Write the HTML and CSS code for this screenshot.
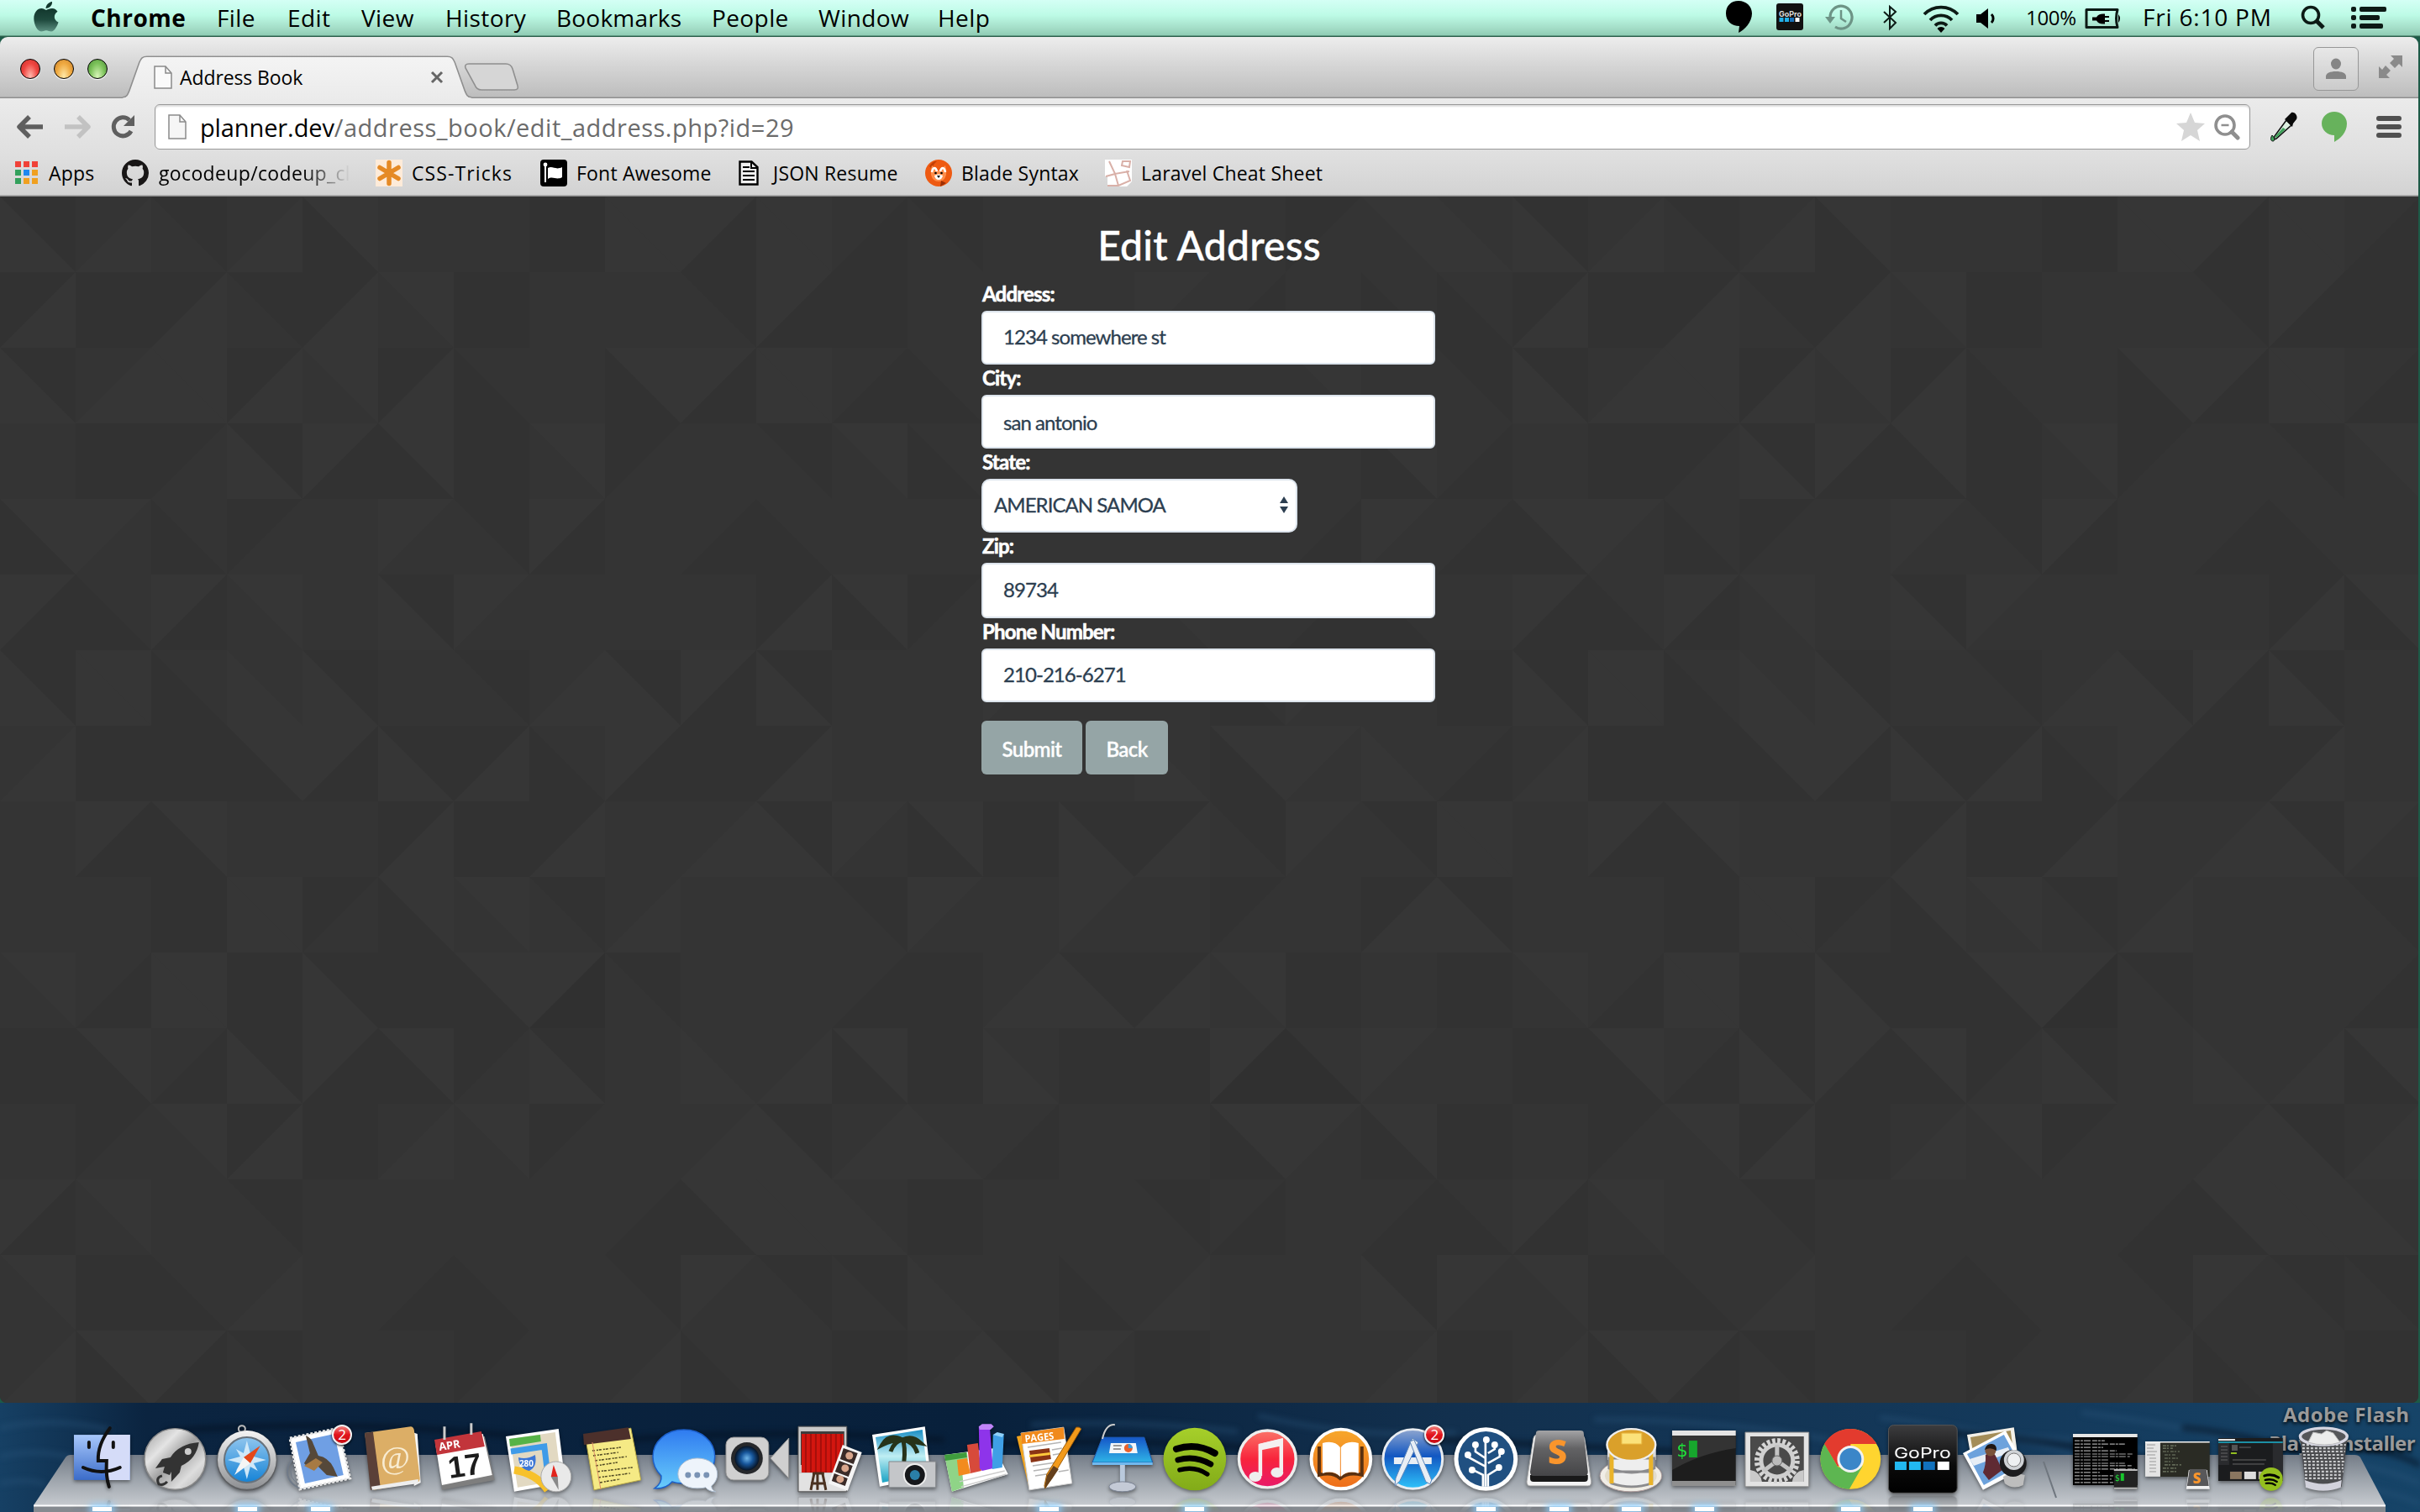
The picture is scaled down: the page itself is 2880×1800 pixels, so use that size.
FILE: index.html
```html
<!DOCTYPE html>
<html lang="en">
<head>
<meta charset="utf-8">
<title>Address Book</title>
<link rel="stylesheet" href="styles.css">
</head>
<body>
<svg class="defs" width="0" height="0" aria-hidden="true">
  <defs>
    <linearGradient id="steel" x1="0" y1="0" x2="0" y2="1"><stop offset="0" stop-color="#f4f4f4"/><stop offset="1" stop-color="#8d8f92"/></linearGradient>
    <linearGradient id="disc" x1="0" y1="0" x2="1" y2="1"><stop offset="0" stop-color="#9a9a9a"/><stop offset=".3" stop-color="#e4e4e4"/><stop offset=".5" stop-color="#a2a2a2"/><stop offset=".75" stop-color="#dedede"/><stop offset="1" stop-color="#a8a8a8"/></linearGradient>
    <linearGradient id="finder" x1="0" y1="0" x2="0" y2="1"><stop offset="0" stop-color="#a8c8fb"/><stop offset="1" stop-color="#3b6cc9"/></linearGradient>
    <linearGradient id="sky" x1="0" y1="0" x2="0" y2="1"><stop offset="0" stop-color="#8fc5ee"/><stop offset="1" stop-color="#1583d6"/></linearGradient>
    <linearGradient id="bubble" x1="0" y1="0" x2="0" y2="1"><stop offset="0" stop-color="#2f7bf0"/><stop offset="1" stop-color="#69cdfb"/></linearGradient>
    <linearGradient id="tunes" x1="0" y1="0" x2="0" y2="1"><stop offset="0" stop-color="#fb7468"/><stop offset=".5" stop-color="#f8243c"/><stop offset="1" stop-color="#e81a6a"/></linearGradient>
    <linearGradient id="books" x1="0" y1="0" x2="0" y2="1"><stop offset="0" stop-color="#f7a82c"/><stop offset="1" stop-color="#ee6d1a"/></linearGradient>
    <linearGradient id="store" x1="0" y1="0" x2="0" y2="1"><stop offset="0" stop-color="#8fa6cf"/><stop offset=".45" stop-color="#1257c2"/><stop offset="1" stop-color="#2fc4fb"/></linearGradient>
    <linearGradient id="key" x1="0" y1="0" x2="0" y2="1"><stop offset="0" stop-color="#a3a3a5"/><stop offset=".4" stop-color="#626264"/><stop offset="1" stop-color="#454547"/></linearGradient>
    <linearGradient id="black" x1="0" y1="0" x2="0" y2="1"><stop offset="0" stop-color="#3c3c3e"/><stop offset=".6" stop-color="#0a0a0a"/><stop offset="1" stop-color="#000"/></linearGradient>
    <linearGradient id="beach" x1="0" y1="0" x2="0" y2="1"><stop offset="0" stop-color="#1b8fc4"/><stop offset=".5" stop-color="#bfeef3"/><stop offset="1" stop-color="#1aa3c4"/></linearGradient>
    <linearGradient id="table" x1="0" y1="0" x2="0" y2="1"><stop offset="0" stop-color="#1556c8"/><stop offset="1" stop-color="#2fb4e6"/></linearGradient>
    <radialGradient id="lens"><stop offset="0" stop-color="#6fb4e8"/><stop offset=".5" stop-color="#16559a"/><stop offset="1" stop-color="#061426"/></radialGradient>
    <linearGradient id="lime" x1="0" y1="0" x2="0" y2="1"><stop offset="0" stop-color="#a6cf2a"/><stop offset="1" stop-color="#82ab18"/></linearGradient>
    <linearGradient id="apple" x1="0" y1="0" x2="0" y2="1"><stop offset="0" stop-color="#12372d"/><stop offset=".5" stop-color="#1f4a3e"/><stop offset="1" stop-color="#5c8f80"/></linearGradient>
    <linearGradient id="tabfill" x1="0" y1="0" x2="0" y2="1"><stop offset="0" stop-color="#f4f4f4"/><stop offset="1" stop-color="#ebebeb"/></linearGradient>
    <linearGradient id="shelf" x1="0" y1="0" x2="0" y2="1"><stop offset="0" stop-color="#747c87"/><stop offset=".45" stop-color="#9aa1a9"/><stop offset="1" stop-color="#c6cacf"/></linearGradient>
  </defs>
</svg>

<header class="menubar">
  <svg class="apple" viewBox="0 0 30 36"><path fill="url(#apple)" d="M15 10c2-1 4-2 7-2 3 0 5 1.600 6.500 3.700-5.500 3.500-4.500 10.600 1 12.800-1 3.500-4.500 11-8.500 11-2.500 0-3.500-1.300-6-1.300s-3.800 1.300-6 1.300C4.500 35.500.3 27 .3 20c0-7.500 4.500-12 9-12 2.500 0 4 1.300 5.700 2z"/><path fill="#12372d" d="M14.500 8C14.500 4 18 .5 22 0c.5 4-3 8-7.500 8z"/></svg>
  <nav class="menus">
    <span class="app">Chrome</span><span class="m1">File</span><span class="m2">Edit</span><span class="m3">View</span><span class="m4">History</span><span class="m5">Bookmarks</span><span class="m6">People</span><span class="m7">Window</span><span class="m8">Help</span>
  </nav>
  <div class="status">
    <svg viewBox="2050 0 430 44" width="430" height="44">
      <path d="M2069 1c9 0 16 6.500 16 15 0 10-9 20-16 23l1-8c-9 0-16-6-16-15s6-15 15-15z"/>
      <rect x="2114" y="4" width="32" height="32" rx="3" fill="#111"/><text x="2117" y="20" class="gopro-sm">GoPro</text><path fill="#22b0ea" d="M2117.500 21h5v5h-5zM2124 21h5v5h-5z"/><path fill="#1870b8" d="M2130 21h5v5h-5z"/><path fill="#fff" d="M2136.500 21h5v5h-5z"/>
      <g fill="none" stroke="#6d9486" stroke-width="3.200"><path d="M2178 21a13 13.500 0 1 1 6 11"/><path d="M2191 12v10l6 4" stroke-width="2.500"/></g><path fill="#6d9486" d="M2172 20h12l-6 8z"/>
      <path d="M2242 14l14 13-7 7V8l7 6-14 13" fill="none" stroke="#0c1a15" stroke-width="2"/>
      <g fill="none" stroke="#0c1a15" stroke-width="3.800"><path d="M2290 17a28 28 0 0 1 40 0"/><path d="M2297 24a18 18 0 0 1 26 0"/><path d="M2303 30.500a9.500 9.500 0 0 1 14 0"/></g><path d="M2305.500 34l4.500 5 4.500-5a6 6 0 0 0-9 0z"/>
      <path d="M2352 17h5l9-7v24l-9-7h-5z"/><path d="M2370 17a7 7 0 0 1 0 10" fill="none" stroke="#000" stroke-width="3"/>
      <text x="2411" y="30" class="pct" textLength="60">100%</text>
    </svg>
    <svg viewBox="2480 0 66 44" width="66" height="44"><path d="M2483 11.500h37q-3 10.500 0 21h-37z" fill="none" stroke="#0c1a15" stroke-width="3" stroke-linejoin="round"/><path d="M2521 17q4 5 0 10z"/><path d="M2490 20.500h5q2-4 8-4h2v2.500h5v2h-5v3h5v2h-5v2.500h-2q-6 0-8-4h-5z"/></svg>
    <span class="clock">Fri 6:10 PM</span>
    <svg viewBox="2735 0 110 44" width="110" height="44"><circle cx="2750" cy="18" r="9.500" fill="none" stroke="#0c1a15" stroke-width="3.600"/><path d="M2757 25l8 8" stroke="#0c1a15" stroke-width="5"/><g fill="#0c1a15"><rect x="2798" y="8" width="6" height="6" rx="2"/><rect x="2808" y="8" width="32" height="6" rx="2"/><rect x="2798" y="18" width="6" height="6" rx="2"/><rect x="2808" y="18" width="24" height="6" rx="2"/><rect x="2798" y="28" width="6" height="6" rx="2"/><rect x="2808" y="28" width="28" height="6" rx="2"/></g></svg>
  </div>
</header>

<section class="window">
  <div class="tabstrip">
    <div class="lights"><i class="red"></i><i class="amber"></i><i class="green"></i></div>
    <div class="tab">
      <svg class="tab-shape" viewBox="0 0 424 52"><path d="M0 50.500c5 0 6-3 8-8L20 8c2-5 4-7.500 9-7.500h361c5 0 7 3 9 7.500l12 34.500c2 5 3 8 8 8V52H0z" fill="url(#tabfill)"/><path d="M0 50c5 0 6-3 8-8L20 8c2-5 4-7 9-7h361c5 0 7 2 9 7l12 34c2 5 3 8 8 8" fill="none" stroke="#8f8f8f" stroke-width="1.600"/></svg>
      <div class="tab-body">
        <svg width="22" height="28" viewBox="0 0 22 28"><path d="M1 1h13l7 8v18H1z" fill="#fafafa" stroke="#8a8a8a" stroke-width="1.500"/><path d="M14 1v8h7" fill="none" stroke="#8a8a8a" stroke-width="1.500"/></svg>
        <span class="tab-title">Address Book</span>
        <svg width="16" height="16" viewBox="0 0 16 16"><path d="M2 2l12 12M14 2L2 14" stroke="#666" stroke-width="3"/></svg>
      </div>
    </div>
    <svg class="newtab" width="66" height="36" viewBox="0 0 66 36"><path d="M6 2h44c5 0 7 3 8 6l6 20c1 3 0 5-4 5H21c-5 0-7-3-8-6L2 7c-1-3 0-5 4-5z" fill="#d6d6d6" stroke="#8f8f8f" stroke-width="1.600"/></svg>
    <div class="strip-right">
      <div class="user"><svg width="26" height="26" viewBox="0 0 26 26" fill="#858585"><ellipse cx="13" cy="7" rx="6" ry="6.500"/><path d="M1 25v-3c0-4 5-6 12-6s12 2 12 6v3z"/></svg></div>
      <svg width="28" height="28" viewBox="0 0 28 28" fill="#8a8a8a"><path d="M14 1h14v14l-4-4-5 5-6-6 5-5zM0 14l4 4 4-5 6 6-5 5 4 4H0z"/></svg>
    </div>
  </div>

  <div class="toolbar">
    <div class="navs">
      <svg width="32" height="30" viewBox="0 0 32 30"><path d="M15 3L3 15l12 12M4 15h27" fill="none" stroke="#5f5f5f" stroke-width="5.500" stroke-linejoin="round"/></svg>
      <svg width="32" height="30" viewBox="0 0 32 30"><path d="M17 3l12 12-12 12M28 15H1" fill="none" stroke="#c2c2c2" stroke-width="5.500" stroke-linejoin="round"/></svg>
      <svg width="30" height="30" viewBox="0 0 30 30"><path d="M24 20a11 11 0 1 1-2-13" fill="none" stroke="#5f5f5f" stroke-width="5"/><path d="M28 1v13H15z" fill="#5f5f5f"/></svg>
    </div>
    <div class="omnibox">
      <svg width="22" height="30" viewBox="0 0 22 30"><path d="M1 1h13l7 8v20H1z" fill="#f6f6f6" stroke="#8a8a8a" stroke-width="1.500"/><path d="M14 1v8h7" fill="none" stroke="#8a8a8a" stroke-width="1.500"/></svg>
      <span class="url"><b>planner.dev</b>/address_book/edit_address.php?id=29</span>
      <svg class="star" width="36" height="36" viewBox="0 0 36 36"><path fill="#d6d6d6" d="M18 1l5 12 12 1-9 8 3 13-11-7-11 7 3-13-9-8 12-1z"/></svg>
      <svg width="32" height="32" viewBox="0 0 32 32"><g fill="none" stroke="#8f8f8f"><circle cx="14" cy="14" r="11" stroke-width="3.600"/><path d="M9.500 14h9" stroke-width="2.600"/><path d="M22 22l7 7" stroke-width="5" stroke-linecap="round"/></g></svg>
    </div>
    <svg class="ext" viewBox="0 0 32 36"><path d="M19 10l6 6L7 32l-3 1 1-4z" fill="#dceee0" stroke="#111" stroke-width="1.600"/><path d="M15 19l3 2L7 31l-2-1z" fill="#3fa05a"/><path d="M17 9l9 9 1-4 4-5c2-4-2-9-6-8l-6 6z" fill="#0a0a0a"/><path d="M2 28c-3 5-1 7 1 7s3-3-1-7z" fill="#3fa05a" stroke="#111"/></svg>
    <svg class="balloon" viewBox="0 0 30 36"><path fill="#67b25c" d="M15 0c8 0 15 6 15 14 0 11-8 18-15 22v-8C7 28 0 22 0 14S7 0 15 0z"/></svg>
    <svg class="burger" viewBox="0 0 30 26" fill="#505050"><rect width="30" height="6" rx="3"/><rect y="10" width="30" height="6" rx="3"/><rect y="20" width="30" height="6" rx="3"/></svg>
  </div>

  <nav class="bookmarks">
    <a class="b0"><svg width="28" height="28" viewBox="0 0 28 28"><path fill="#f04138" d="M0 0h7v7H0zM10 0h7v7h-7zM20 0h7v7h-7z"/><path fill="#33a05c" d="M0 10h7v7H0zM0 20h7v7H0z"/><path fill="#1e88f0" d="M10 10h7v7h-7z"/><path fill="#f0a020" d="M20 10h7v7h-7zM10 20h7v7h-7zM20 20h7v7h-7z"/></svg><span>Apps</span></a>
    <a class="b1"><svg width="32" height="32" viewBox="0 0 16 16"><path fill="#181616" d="M8 0C3.580 0 0 3.580 0 8c0 3.540 2.290 6.530 5.470 7.590.4.070.55-.17.55-.38 0-.19-.01-.82-.01-1.490-2.010.37-2.530-.49-2.690-.94-.09-.23-.48-.94-.82-1.130-.28-.15-.68-.52-.01-.53.63-.01 1.080.58 1.230.82.72 1.210 1.870.87 2.330.66.07-.52.28-.87.51-1.070-1.780-.2-3.640-.89-3.640-3.950 0-.87.31-1.590.82-2.150-.08-.2-.36-1.020.08-2.120 0 0 .67-.21 2.200.82.640-.18 1.320-.27 2-.27s1.360.09 2 .27c1.530-1.040 2.200-.82 2.200-.82.44 1.100.16 1.920.08 2.120.51.560.82 1.270.82 2.150 0 3.070-1.870 3.750-3.650 3.950.29.25.54.73.54 1.480 0 1.070-.01 1.930-.01 2.200 0 .21.15.46.55.38A8.010 8.010 0 0 0 16 8c0-4.420-3.580-8-8-8z"/></svg><span class="fade">gocodeup/codeup_cl</span></a>
    <a class="b2"><svg width="32" height="32" viewBox="0 0 32 32"><rect width="32" height="32" fill="#fdebd9"/><path d="M16 3.500v25M5 9.500l22 13M27 9.500l-22 13" stroke="#e58a25" stroke-width="5.500" stroke-linecap="round"/></svg><span>CSS-Tricks</span></a>
    <a class="b3"><svg width="32" height="32" viewBox="0 0 32 32"><rect width="32" height="32" rx="4"/><path d="M6 5v22" stroke="#fff" stroke-width="2"/><circle cx="6" cy="6" r="2.400" fill="#fff"/><path fill="#fff" d="M9 10c6-3 9 3 17-1v12c-7 4-11-2-17 2z"/></svg><span>Font Awesome</span></a>
    <a class="b4"><svg width="24" height="30" viewBox="0 0 24 30"><path d="M1.500 1.500h14L22.500 8v20.500h-21z" fill="#f0f0f0" stroke="#000" stroke-width="2.400"/><path d="M5 8h8M5 13h14M5 18h14M5 23h14" stroke="#000" stroke-width="2.200"/><path d="M15 2v7h7" fill="none" stroke="#000" stroke-width="2"/></svg><span>JSON Resume</span></a>
    <a class="b5"><svg width="32" height="32" viewBox="0 0 32 32"><circle cx="16" cy="16" r="16" fill="#ee5a12"/><path d="M5 8q4-7 9-6-5 4-6 9z" fill="#c23f06"/><path d="M8 7q1 0 5 6h6q4-6 5-6 2 5 1 11-2 8-9 8t-9-8q-1-6 1-11z" fill="#ff8d4a"/><path d="M8 15q1-5 3-5t3 4M18 14q1-4 3-4t3 5" stroke="#fff" stroke-width="2.600" fill="none"/><path d="M11 19q5-3 10 0-1 5-5 5t-5-5z" fill="#fff"/><circle cx="12.500" cy="16" r="1.300"/><circle cx="19.500" cy="16" r="1.300"/><path d="M14 19h4l-2 3z"/><path d="M19 25l6 3-7 4z" fill="#9c2f04"/></svg><span>Blade Syntax</span></a>
    <a class="b6"><svg width="32" height="32" viewBox="0 0 32 32"><path fill="#fff" d="M0 0h32v26l-6 6H3V20H0z"/><path d="M5 2l7 15 17-3M12 17l4 14 14-6-4-12M21 2l9 0-1 7-9-2zM1 20l11-3M16 31l-13 0" fill="none" stroke="#d9b0a8" stroke-width="2"/></svg><span>Laravel Cheat Sheet</span></a>
  </nav>

  <main class="page">
    <svg class="facets" width="2878" height="1436" aria-hidden="true"></svg>
    <form class="form">
      <h1>Edit Address</h1>
      <label>Address:</label><div class="field">1234 somewhere st</div>
      <label>City:</label><div class="field low">san antonio</div>
      <label>State:</label>
      <div class="field select"><span>AMERICAN SAMOA</span><svg width="10" height="20" viewBox="0 0 10 20"><path fill="#2c3e50" d="M5 0l5 8H0zM5 20l5-8H0z"/></svg></div>
      <label>Zip:</label><div class="field tall">89734</div>
      <label>Phone Number:</label><div class="field">210-216-6271</div>
      <div class="actions"><span class="btn submit">Submit</span><span class="btn back">Back</span></div>
    </form>
  </main>
</section>

<footer class="desktop">
  <svg class="waves" width="2880" height="130" viewBox="0 0 2880 130" preserveAspectRatio="none"><g fill="none" stroke-linecap="round"><g stroke="#2a567c" stroke-opacity=".35" stroke-width="7"><path d="M0 30q60-14 130 2M0 64q50-12 100 6M0 96q30-6 50 0M1230 26q120-6 240 8M1500 16q110 26 230 20M1900 20q150 0 290 26M2240 18q160 18 250 52M2360 40q130 0 240 24M2480 12q160 20 230 50M2760 70q60 0 120 26M2790 100q40 0 90 20"/></g><g stroke="#04101f" stroke-opacity=".5" stroke-width="8"><path d="M200 34q200-16 420 6M700 48q200-20 420-4M1180 50q170-10 330 6M1720 44q160 8 320 16M2300 34q160 10 300 44M2600 30q120 12 210 60M2810 54q40 4 70 20"/></g></g></svg>
  <div class="desk-label"><span>Adobe Flash</span><span>Player Installer</span></div>
  <div class="dock">
    <svg class="shelf" width="2800" height="68" viewBox="0 0 2800 68"><path d="M38 3q2-3 6-3h2718q5 0 7 3l30 57H0z" fill="url(#shelf)"/><path d="M0 60h2799v8H0z" fill="#858a90"/><path d="M0 59.500h2799v2H0z" fill="#fff"/></svg>
    <ul class="icons">
      <li class="on"><svg viewBox="0 0 87 90"><rect x="10" y="18" width="67" height="54" fill="url(#finder)"/><path d="M50 18h27v54H49q-2-10-1-23H37q1-20 13-31z" fill="#d5dcf8"/><g fill="none" stroke="#111" stroke-width="4" stroke-linecap="round"><path d="M53 10q-15 20-14 39h10q-1 20 3 31"/><path d="M21 57q22 10 44 0"/><path d="M28 27v6M57 27v6"/></g></svg></li>
      <li><svg viewBox="0 0 87 90"><circle cx="43.500" cy="47" r="36.500" fill="url(#disc)" stroke="#8a8a8a" stroke-width="1.500"/><path d="M72 27q-24 2-34 18l-10 2-8 11 11-2-2 7 8 3 2-4v12l10-11 2-8q18-8 21-28z" fill="#333"/><circle cx="59" cy="38" r="4" fill="#ccc"/><path d="M28 67q-8 2-4 10 6 2 10-3" fill="none" stroke="#333" stroke-width="3"/></svg></li>
      <li class="on"><svg viewBox="0 0 87 90"><circle cx="37" cy="11" r="4" fill="none" stroke="#bbb" stroke-width="2"/><circle cx="43" cy="49" r="36" fill="#5d5f62"/><circle cx="43" cy="48" r="35" fill="url(#steel)"/><circle cx="43" cy="48" r="27" fill="url(#sky)" stroke="#67727c" stroke-width="2"/><path d="M43 25l4 15 9-5-5 9 15 4-15 4 5 9-9-5-4 15-4-15-9 5 5-9-15-4 15-4-5-9 9 5z" fill="#cfe8f8"/><path d="M59 31L47 52l-8-7z" fill="#e4481a"/><path d="M28 66l11-21 8 7z" fill="#f5f5f5"/></svg></li>
      <li class="on"><svg viewBox="0 0 87 90"><circle cx="24" cy="62" r="20" fill="none" stroke="#707a88" stroke-width="2"/><circle cx="24" cy="62" r="16" fill="none" stroke="#707a88"/><path d="M7 22l58-12 14 60-60 13z" fill="#fff" stroke="#e6e6e6" stroke-dasharray="3 2" stroke-width="3"/><path d="M14 27l46-10 11 49-46 10z" fill="#6f9fe4"/><path d="M26 19q7 3 9 10l6 14q12 2 18 14l5 11-13-2-12-12-10 3-5-5 7-12z" fill="#55483a"/><path d="M24 55l14-9 8 5-10 10z" fill="#a77a44"/></svg><b>2</b></li>
      <li><svg viewBox="0 0 87 90"><path d="M66 15l6 2 4 58-8 4z" fill="#f5f5f5"/><path d="M9 16l55-8q3 0 4 4l7 58q0 4-4 5L20 84z" fill="#dcae66"/><path d="M9 16l10-1.500L28 82l-12 2z" fill="#5a4038"/><path d="M17 80l56-9v5L18 84z" fill="#eee"/><text x="28" y="58" class="at">@</text></svg></li>
      <li><svg viewBox="0 0 87 90"><path d="M8 31l58-11 12 52-63 12z" fill="#7e7e7e"/><path d="M7 28l57-11 11 49-60 12z" fill="#fff"/><path d="M6 24l56-10 4 18-57 10z" fill="#c2353b"/><path d="M18 24V8M50 18V4" stroke="#ccc" stroke-width="3"/><text x="12" y="37" class="apr" transform="rotate(-9 12 37)">APR</text><text x="24" y="70" class="day" transform="rotate(-8 24 70)">17</text></svg></li>
      <li><svg viewBox="0 0 87 90"><path d="M4 20l63-9 8 64-61 11z" fill="#fff"/><path d="M9 23l54-8 7 57-52 9z" fill="#e2d9c2"/><path d="M8 23l37-5 1 8-37 6z" fill="#56b347"/><path d="M10 38l40-6 6 50" fill="none" stroke="#3f9be8" stroke-width="7"/><path d="M14 60q26 4 40 24" fill="none" stroke="#f7c12b" stroke-width="9"/><path d="M19 45q10 3 20-3 3 14-7 19-12-2-13-16z" fill="#3c76d6"/><text x="20" y="56" class="route">280</text><circle cx="64" cy="68" r="18" fill="#e9e9e9" stroke="#aaa"/><path d="M61 54l-3 14h8z" fill="#e2241c"/><path d="M67 84l-9-16h8z" fill="#888"/></svg></li>
      <li><svg viewBox="0 0 87 90"><path d="M12 22l54-12 12 62-56 12z" fill="#f5ea85" stroke="#b8a846"/><path d="M9 17l54-8 3 14-56 7z" fill="#4c302b"/><g stroke="#4b4420" stroke-width="1.500" fill="none" stroke-dasharray="3 2 2 1"><path d="M20 37l34-4M21 43l30-4M23 49l38-5M24 55l26-4M26 62l42-5M27 69l38-5M29 75l24-4"/></g><path d="M20 27l10 56" stroke="#dc8f66"/></svg></li>
      <li><svg viewBox="0 0 87 90"><path d="M42 12c21 0 37 14 37 32S63 75 42 76q-9 0-14-2-8 9-21 8 9-6 8-15C8 60 5 53 5 44 5 26 21 12 42 12z" fill="url(#bubble)" stroke="#1c5fca" stroke-width="1.500"/><path d="M58 46c14 0 24 8 24 19 0 6-3 11-7 14q0 5 5 7-8 0-12-5-4 1-10 1c-14 0-23-7-23-17s9-19 23-19z" fill="#eef4fb" stroke="#aebed0"/><g fill="#7a93b4"><circle cx="47" cy="66" r="3.500"/><circle cx="58" cy="66" r="3.500"/><circle cx="69" cy="66" r="3.500"/></g></svg></li>
      <li><svg viewBox="0 0 87 90"><path d="M59 46l22-24v48z" fill="#cfcfcf" stroke="#909090"/><rect x="6" y="21" width="51" height="51" rx="9" fill="#d0d0d0" stroke="#999"/><circle cx="31" cy="46" r="19" fill="#26282b"/><circle cx="31" cy="46" r="14.500" fill="url(#lens)"/></svg></li>
      <li><svg viewBox="0 0 87 90"><path d="M5 8h58v78H5z" fill="#c9c9c9" stroke="#555"/><path d="M8 14h52v40H8z" fill="#3d3d3d"/><path d="M9 17h50v46H9z" fill="#d3160f"/><path d="M14 17v46M20 17v46M26 17v46M32 17v46M38 17v46M44 17v46M50 17v46M56 17v46" stroke="#a50f0b" stroke-width="2"/><path d="M6 64h56v21H6z" fill="#e2e2e2"/><path d="M22 64h14M24 64l-4 20M34 64l4 20M28 64v20M20 76h18" stroke="#4a3120" stroke-width="3"/><path d="M58 30l23 9-17 46-23-9z" fill="#f5f5f5"/><path d="M59 34l17 6-5 13-16-6zM54 49l16 6-5 13-16-6zM48 64l16 6-3 9-16-6z" fill="#3a2b28"/><g fill="#d8a68c"><circle cx="66" cy="43" r="4.500"/><circle cx="61" cy="58" r="4.500"/><circle cx="55" cy="71" r="4.500"/></g></svg></li>
      <li><svg viewBox="0 0 87 90"><path d="M6 18l63-10 7 60-61 12z" fill="#fff"/><path d="M10 21l56-9 6 52-54 11z" fill="url(#beach)"/><path d="M44 50q2-18-2-28M42 24q-16-8-24 6 12-6 24-6 12-6 22 4-10-2-22-4-10 2-14 14M42 24q14 2 18 16" fill="none" stroke="#26331a" stroke-width="5"/><path d="M26 50h56v31H26z" fill="#c4c6c9" stroke="#85888c"/><circle cx="57" cy="66" r="14" fill="#eee"/><circle cx="57" cy="66" r="12" fill="#16181b"/><circle cx="57" cy="66" r="6" fill="#2a7fa8"/></svg></li>
      <li><svg viewBox="0 0 87 90"><path d="M6 42l60-8 16 31-67 21z" fill="#fff"/><path d="M6 42l27-3 1 10-8 1 3 31-14 5z" fill="#8fd487"/><path d="M6 42l26-3 1 6-26 4z" fill="#3f9c3d"/><path d="M21 48l12-2 4 18-14 3z" fill="#f28b1e"/><path d="M33 30l13-2 4 33-13 3z" fill="#d74a3b"/><path d="M47 8l13-1 4 51-13 3-3-3z" fill="#8e34ea"/><path d="M47 8l4-3h11l3 3-4 4H48z" fill="#c084f8"/><path d="M64 18l13-1-2 40-12 2z" fill="#3f9fe6"/><path d="M64 18l5-3 8 2-2 4z" fill="#8fd0f8"/><g stroke="#ccc" stroke-width="1.500"><path d="M24 74l54-13M26 80l54-15"/></g></svg></li>
      <li class="on"><svg viewBox="0 0 87 90"><path d="M5 20l10-2 14 62-9 3z" fill="#f3a41c"/><path d="M10 16l51-7 10 67-51 8z" fill="#fff" stroke="#ccc"/><path d="M10 16l51-7 1 14-51 6z" fill="#f08a1c"/><text x="15" y="27" class="pages" transform="rotate(-6 15 27)" textLength="35" lengthAdjust="spacingAndGlyphs">PAGES</text><path d="M20 37l24-3 2 13-24 4z" fill="#8a3415"/><path d="M20 42l25-3 0 3-25 3z" fill="#ffc93c"/><g stroke="#b5b5b5" stroke-width="1.500"><path d="M18 33l40-6M47 36l12-2M48 42l12-2M24 55l28-4M25 61l26-4M27 67l20-3M55 62l12-2"/></g><path d="M76 9q4-1 6 2L48 68l-9 14-1-3 3-14z" fill="#f29a1b" stroke="#a05c08"/><path d="M49 55l6 4-8 12-9 12 3-16z" fill="#65401c"/></svg></li>
      <li><svg viewBox="0 0 87 90"><path d="M41 48h6v34h-6z" fill="#b9c9dc"/><ellipse cx="44" cy="80" rx="16" ry="6" fill="#c4cad6" stroke="#7c8595"/><path d="M20 21h50l10 30H8z" fill="url(#table)" stroke="#1c59b0"/><path d="M8 51h72v3H8z" fill="#71b9ee"/><path d="M30 28h30l2 12H28z" fill="#f2f6fa"/><circle cx="51" cy="34" r="5" fill="#e8602c"/><path d="M51 34v-5a5 5 0 0 1 5 5z" fill="#3aa0e0"/><path d="M33 31h10M33 35h9" stroke="#999" stroke-width="2"/><path d="M20 23q4-18 15-17" fill="none" stroke="#ccc" stroke-width="2"/></svg></li>
      <li class="on"><svg viewBox="0 0 87 90"><circle cx="44" cy="47" r="37.500" fill="url(#lime)"/><g fill="none" stroke="#000" stroke-linecap="round"><path d="M22 35q24-8 46 5" stroke-width="8"/><path d="M24 48q20-6 39 5" stroke-width="7"/><path d="M26 60q18-5 33 5" stroke-width="5.500"/></g></svg></li>
      <li><svg viewBox="0 0 87 90"><circle cx="43.500" cy="47" r="34" fill="url(#tunes)" stroke="#eee" stroke-width="3.500"/><path d="M35 67V31l25-6v36" fill="none" stroke="#f4f0f0" stroke-width="4.500"/><path d="M33 29l29-7v9l-29 6z" fill="#f4f0f0"/><ellipse cx="29" cy="68" rx="7.500" ry="6" fill="#eee"/><ellipse cx="55" cy="63" rx="7.500" ry="6" fill="#eee"/></svg></li>
      <li><svg viewBox="0 0 87 90"><circle cx="44" cy="47" r="35.500" fill="url(#books)" stroke="#fff" stroke-width="4"/><path d="M18 32v34q16-4 25 4 10-8 26-4V32" fill="none" stroke="#5a3010" stroke-width="4"/><path d="M22 28q14-4 21 5v35q-8-8-21-4zM65 28q-14-4-21 5v35q8-8 21-4z" fill="#fff"/></svg></li>
      <li><svg viewBox="0 0 87 90"><circle cx="43.500" cy="47" r="35.500" fill="url(#store)" stroke="#e9edf2" stroke-width="3"/><path d="M21 45h45v8H21z" fill="#e8eef5"/><path d="M43 22l7 5-22 46-6 6 1-9z" fill="#e8eef5" stroke="#5b84b8"/><path d="M40 26l5-2 21 48-2 5-5-3z" fill="#e8eef5" stroke="#5b84b8"/></svg><b>2</b></li>
      <li class="on"><svg viewBox="0 0 87 90"><circle cx="43.500" cy="47" r="38" fill="#fff"/><circle cx="43.500" cy="47" r="33" fill="#205081"/><g fill="none" stroke="#fff" stroke-width="2.600"><path d="M40 80V66L28 60M46 80V66l13-8M43 80V25M43 56L23 45V42M43 46L31 38V31M46 52l14-8V40M46 40l8-5v-5"/></g><g fill="#fff"><circle cx="44" cy="24" r="4"/><circle cx="31" cy="30" r="4"/><circle cx="54" cy="30" r="4"/><circle cx="22" cy="42" r="4"/><circle cx="62" cy="38" r="4"/><circle cx="27" cy="60" r="4"/><circle cx="59" cy="57" r="4"/></g></svg></li>
      <li class="on"><svg viewBox="0 0 87 90"><path d="M13 22q1-4 4-4h52q4 0 5 4l8 52q0 5-4 5H9q-4 0-4-5z" fill="#f4f4f4" stroke="#aaa"/><path d="M9 66h69v4q0 4-4 4H13q-4 0-4-4z" fill="#191919"/><path d="M16 16q0-3 4-3h49q4 0 4 3l5 46q0 5-4 5H13q-4 0-4-5z" fill="url(#key)"/><text x="30" y="53" class="sub">S</text></svg></li>
      <li class="on"><svg viewBox="0 0 87 90"><ellipse cx="43" cy="67" rx="37" ry="19" fill="#f0ede6" stroke="#a99"/><ellipse cx="43" cy="67" rx="31" ry="15" fill="#e2dccb"/><path d="M15 30h58v18H15z" fill="#d8d8da"/><path d="M17 46h54v12q-27 10-54 0zM20 62h48v14q-24 8-48 0z" fill="#eee" stroke="#8b8b8e" stroke-width="3"/><path d="M20 32v44M67 32v46" stroke="#eab32a" stroke-width="5"/><ellipse cx="43.500" cy="30" rx="29" ry="19" fill="#daa02a" stroke="#eee" stroke-width="2.500"/><path d="M32 16h24v13H32z" fill="#fbe27a" stroke="#eab940"/></svg></li>
      <li class="on"><svg viewBox="0 0 87 90"><path d="M5 13h76v65H5z" fill="#1d1d1d"/><path d="M5 19h76v15Q40 40 5 60z" fill="#333"/><path d="M5 13h76v6H5z" fill="#e4e4e4"/><path d="M5 73h76v6H5z" fill="#8f8f8f"/><text x="10" y="44" class="prompt">$</text><path d="M25 25h10v20H25z" fill="#17a62d"/></svg></li>
      <li><svg viewBox="0 0 87 90"><path d="M5 15h76v65H5z" fill="#e3e3e3" stroke="#8d8d8d"/><path d="M11 20h64v54H11z" fill="#4a4a4a"/><circle cx="43" cy="49" r="23" fill="none" stroke="#d5d5d5" stroke-width="8" stroke-dasharray="3.600 2.400"/><circle cx="43" cy="49" r="19" fill="none" stroke="#cfcfcf" stroke-width="5"/><path d="M43 30v19l-16 12M43 49l17 12" stroke="#c4c4c4" stroke-width="5" fill="none"/><circle cx="43" cy="49" r="6" fill="#bbb" stroke="#666"/><path d="M11 60q12 2 14 14H11zM75 60q-12 2-14 14h14z" fill="#c9c9c9"/></svg></li>
      <li class="on"><svg viewBox="0 0 87 90"><circle cx="43.500" cy="47" r="36" fill="#ffd52f"/><path d="M43.500 47L28 56 12 29a36 36 0 0 1 62.500 0H43.500z" fill="#e33b2e"/><path d="M12.300 29A36 36 0 0 0 42 83l16-28-14.500 7L28 56z" fill="#5db651"/><circle cx="43.500" cy="47" r="16" fill="#f2f2f2"/><circle cx="43.500" cy="47" r="13" fill="#3b86c8"/></svg></li>
      <li class="on"><svg viewBox="0 0 87 90"><rect x="2.500" y="6.500" width="82" height="81" rx="6" fill="url(#black)" stroke="#555"/><text x="9" y="46" class="gopro" textLength="68" lengthAdjust="spacingAndGlyphs">GoPro</text><path fill="#22b8f0" d="M10 50h14v10H10zM27 50h14v10H27z"/><path fill="#1272bd" d="M44 50h14v10H44z"/><path fill="#fff" d="M61 50h14v10H61z"/></svg></li>
      <li><svg viewBox="0 0 87 90"><path d="M9 18l56-9 6 45-54 9z" fill="#f3f0e8"/><path d="M13 21l48-8 5 38-46 9z" fill="#a48d58"/><path d="M4 40l51-27 24 44-51 27z" fill="#fff"/><path d="M9 41l44-23 20 36-44 24z" fill="#6da2dc"/><path d="M12 47l46-14 3 6-44 16z" fill="#e8eef5"/><path d="M31 42q9-6 13 3l7 15-16 12-7-9q4-10 3-21z" fill="#5f2a33"/><circle cx="37" cy="37" r="6.500" fill="#7a523a"/><path d="M30 36q2-8 9-7 6 1 5 8-7-5-14-1z" fill="#1f1612"/><path d="M52 68q12-6 26-2l-2 12q-12 6-22-2z" fill="#bdbdbd"/><circle cx="64" cy="52" r="16" fill="#1c1c1e"/><circle cx="65" cy="48" r="12" fill="#cfd2d6"/><circle cx="65" cy="48" r="8" fill="#eef0f2" stroke="#777"/></svg></li>
      <li class="sep"><svg viewBox="0 0 43 90"><path d="M13 50l15 43" stroke="#6f767e" stroke-width="2"/></svg></li>
      <li><svg viewBox="0 0 87 90"><path d="M5 17h77v61H5z"/><path d="M5 17h77v4H5z" fill="#e6e6e6"/><g stroke="#a5a5a5" stroke-width="1.200" stroke-dasharray="6 1 3 1 8 2"><path d="M7 25h36M7 29h60M7 33h34M7 37h50M7 41h70M7 44h66M7 48h40M7 52h60M7 55h68M7 59h72M7 63h30M7 67h46M7 71h44M7 75h46"/></g><path d="M54 59h28v24H54z" fill="#222"/><path d="M54 59h28v2H54zM54 81h28v2H54z" fill="#bbb"/><text x="55" y="73" class="prompt-sm">$</text><path d="M62 64h4v9h-4z" fill="#17c62d"/></svg></li>
      <li><svg viewBox="0 0 87 90"><path d="M5 26h77v42H5z" fill="#2a2b24"/><path d="M5 26h18v42H5z" fill="#e4e4e4"/><path d="M5 26h77v1.500H5z" fill="#f4f4f4"/><g stroke="#77806a" stroke-width="1.200" stroke-dasharray="4 1 2 2"><path d="M26 31h16M26 34h12M26 38h20M28 42h14M28 46h18M28 50h10M28 54h20M26 58h16M26 62h18"/></g><path d="M7 30h10M7 34h8M7 38h12M7 42h10M10 46h8M10 50h8M10 54h8M10 58h8M10 62h8" stroke="#999"/><path d="M57 60h22l3 23H54z" fill="#f2f2f2"/><path d="M58 59h20l3 20H55z" fill="#58585a"/><text x="62" y="76" class="sub-sm">S</text></svg></li>
      <li><svg viewBox="0 0 87 90"><path d="M5 22h77v51H5z" fill="#1b1c1e"/><path d="M5 26h77v2H5z" fill="#1c8fa5"/><path d="M5 23h20v2H5z" fill="#eee"/><path d="M5 28h13v26H5zM70 28h12v45H70z" fill="#2a2b2e"/><path d="M21 30h7v7h-7z" fill="#555"/><path d="M20 39h7v2h-7z" fill="#92be20"/><path d="M19 62h14v9H19z" fill="#8a7660"/><path d="M36 62h14v9H36z" fill="#ddd"/><path d="M53 62h10v9H53z" fill="#b7afa5"/><path d="M30 33h14M22 48h40M22 53h38M8 32h8M8 36h8M8 40h8M8 44h8M8 48h8" stroke="#666"/><circle cx="68" cy="71" r="14" fill="#94bf1e"/><g fill="none" stroke="#000" stroke-linecap="round"><path d="M60 67q9-3 17 2" stroke-width="3"/><path d="M61 72q8-2 14 2M62 76q7-1 11 2" stroke-width="2.400"/></g></svg></li>
      <li><svg viewBox="0 0 87 90"><path d="M15 20h57l-7 60q-22 9-43 0z" fill="#4c4d50"/><g stroke="#c9cacc" stroke-width="2.200" stroke-dasharray="3 2"><path d="M18 30h52M18 34h51M18 38h51M19 42h50M19 46h49M20 50h48M20 54h47M20 58h47M21 62h46M21 66h45M21 70h45"/></g><path d="M21 72q22 9 44 0l-1 9q-21 8-42 0z" fill="#d2d2dc"/><ellipse cx="43.500" cy="20" rx="28" ry="10" fill="#55565a" stroke="#d6d6e2" stroke-width="3.500"/><path d="M25 27l6-12 10 2 6-4 8 3 8 11q-18 6-38 0z" fill="#ececec" stroke="#bbb"/></svg></li>
    </ul>
  </div>
</footer>
<script src="facets.js"></script>
</body>
</html>
```
FILE: styles.css
```css
* { box-sizing: border-box; }
html, body { margin: 0; width: 2880px; height: 1800px; overflow: hidden; }
body {
  display: flex;
  flex-direction: column;
  background: #1d5a47;
  font-family: "Open Sans", "Noto Sans", sans-serif;
  color: #000;
}
svg { display: block; flex: none; }
.defs { position: absolute; }

/* system menu bar */
.menubar {
  display: flex;
  align-items: center;
  flex: none;
  height: 44px;
  padding: 0 35px 0 40px;
  background: linear-gradient(#d4fff5 0, #bdfbe6 18px, #a3dcc6 34px, #8fccb4 42px, #2b5f4b 43px);
}
.apple { width: 30px; height: 36px; margin: 0 38px 4px 0; }
.menus { display: flex; font-size: 28px; line-height: 43px; margin-top: -2px; white-space: nowrap; }
.menus span { flex: none; }
.app { width: 150px; font-weight: 700; letter-spacing: .5px; }
.m1 { width: 84px; }
.m2 { width: 88px; }
.m3 { width: 100px; }
.m4 { width: 132px; }
.m5 { width: 185px; }
.m6 { width: 127px; }
.m7 { width: 142px; }
.m1, .m2, .m3, .m4, .m6, .m7, .m8 { letter-spacing: .4px; }
.m5 { letter-spacing: .2px; }
.status { display: flex; margin-left: auto; }
.clock { width: 189px; padding-left: 4px; font-size: 28px; line-height: 41px; letter-spacing: .8px; white-space: nowrap; }
.pct { font-size: 24px; }
.gopro-sm { font: 700 9px "Inter", sans-serif; fill: #ddd; }

/* browser window */
.window {
  display: flex;
  flex-direction: column;
  flex: none;
  width: 2878px;
  height: 1626px;
  overflow: hidden;
  border-radius: 9px 9px 8px 8px;
}
.tabstrip {
  display: flex;
  flex: none;
  height: 73px;
  padding-left: 24px;
  background: linear-gradient(#ededed, #d6d6d6 45%, #bcbcbc);
  box-shadow: inset 0 -1.500px #8f8f8f;
}
.lights { display: flex; gap: 16px; width: 122px; padding-top: 26px; }
.lights i { width: 24px; height: 24px; border-radius: 50%; border: 1.500px solid; box-shadow: 0 1px 1px #fff; }
.red { border-color: #96211d; background: radial-gradient(ellipse at 50% 90%, #ffb9ae, #ef4540 55%, #c2302c); }
.amber { border-color: #94611d; background: radial-gradient(ellipse at 50% 90%, #ffe9a8, #efa940 55%, #c47c2c); }
.green { border-color: #39752a; background: radial-gradient(ellipse at 50% 90%, #d8f6b8, #7cc25a 55%, #4c8e38); }
.tab { position: relative; width: 406px; margin-top: 22px; }
.tab-shape { position: absolute; left: 0; top: 0; width: 420px; height: 52px; }
.tab-body { position: relative; display: flex; align-items: center; height: 48px; padding: 3px 0 0 37px; }
.tab-title { width: 307px; padding-left: 9px; font-size: 23px; letter-spacing: -.1px; }
.newtab { margin-top: 30px; }
.strip-right { display: flex; gap: 24px; margin: 12px 19px 0 auto; }
.strip-right > svg { margin-top: 9px; }
.user { display: flex; align-items: center; justify-content: center; width: 54px; height: 52px; border: 1.500px solid #979797; border-radius: 6px; background: rgba(255, 255, 255, .15); }

.toolbar {
  display: flex;
  align-items: center;
  flex: none;
  height: 68px;
  padding: 0 20px;
  background: linear-gradient(#ebebeb, #dfdfdf);
}
.navs { display: flex; gap: 24px; width: 164px; }
.omnibox {
  display: flex;
  align-items: center;
  width: 2495px;
  height: 54px;
  padding: 0 11px 0 15px;
  background: #fff;
  border: 1.500px solid #999;
  border-radius: 6px;
  box-shadow: inset 0 2px 2px #ddd;
}
.url { padding-left: 16px; font-size: 29px; letter-spacing: .5px; color: #6b6b6b; white-space: nowrap; }
.url b { font-weight: 400; color: #000; letter-spacing: -.1px; }
.star { margin: 0 9px 0 auto; }
.ext { width: 32px; height: 36px; margin-left: 24px; }
.balloon { width: 30px; height: 36px; margin-left: 29px; }
.burger { width: 30px; height: 26px; margin-left: 35px; }

.bookmarks {
  display: flex;
  flex: none;
  height: 49px;
  padding-left: 18px;
  background: linear-gradient(#dfdfdf, #d2d2d2);
  box-shadow: inset 0 -1.500px #8a8a8a;
  font-size: 23px;
}
.bookmarks a { display: flex; align-items: center; height: 42px; white-space: nowrap; letter-spacing: .2px; }
.bookmarks span { margin-top: -1px; }
.b0 { width: 127px; gap: 12px; }
.b1 { width: 302px; gap: 12px; }
.b2 { width: 196px; gap: 11px; }
.bookmarks .b2 { letter-spacing: 1.100px; }
.bookmarks .b1 { letter-spacing: .35px; }
.b3 { width: 236px; gap: 11px; }
.b4 { width: 222px; gap: 17px; }
.b5 { width: 214px; gap: 11px; }
.b6 { gap: 11px; }
.fade { width: 228px; overflow: hidden; background: linear-gradient(90deg, #000 75%, rgba(0, 0, 0, 0)); -webkit-background-clip: text; background-clip: text; color: transparent; }

/* web page */
.page { position: relative; flex: 1; background: #343434; font-family: "Lato", sans-serif; }
.facets { position: absolute; left: 0; top: 0; }
.form { position: relative; width: 540px; margin-left: 1168px; color: #fff; font-size: 24px; }
h1 { margin: 0; padding: 27px 0 0 2px; height: 103px; font-size: 48px; line-height: 62px; font-weight: 500; text-align: center; letter-spacing: .2px; -webkit-text-stroke: .4px #fff; }
label { display: block; height: 36px; padding-left: 1px; font-weight: 700; line-height: 31px; letter-spacing: -.8px; -webkit-text-stroke: .6px #fff; }
h1 + label { height: 33px; line-height: 25px; }
.field {
  display: flex;
  align-items: center;
  height: 64px;
  padding: 0 24px 3px;
  background: #fff;
  border: 2px solid #dce4ec;
  border-radius: 6px;
  color: #2c3e50;
  letter-spacing: -.95px;
  -webkit-text-stroke: .3px #2c3e50;
}
.low { padding-bottom: 0; }
.tall { height: 66px; }
.select { width: 376px; padding: 0 9px 3px 13px; justify-content: space-between; border-radius: 10px; }
.actions { display: flex; gap: 4px; margin-top: 22px; }
.btn { height: 64px; border-radius: 6px; background: #95a5a6; font-weight: 600; line-height: 67px; text-align: center; letter-spacing: -.6px; -webkit-text-stroke: .3px #fff; }
.submit { width: 120px; }
.back { width: 98px; }

/* desktop strip and dock */
.desktop {
  position: relative;
  flex: none;
  height: 130px;
  overflow: hidden;
  background: linear-gradient(90deg, #164064 0, #0b2440 6%, #08203b 40%, #12304e 60%, #143a5c 85%, #164468 100%);
}
.waves { position: absolute; left: 0; top: 0; filter: blur(3px); }
.desk-label {
  position: absolute;
  left: 2700px;
  top: -3px;
  width: 180px;
  display: flex;
  flex-direction: column;
  font-size: 24px;
  font-weight: 700;
  line-height: 34px;
  color: #9a9a9a;
  white-space: nowrap;
  text-shadow: 0 2px 4px #000;
}
.desk-label span:first-child { padding-left: 17px; letter-spacing: .5px; }
.desk-label span:last-child { letter-spacing: -.5px; }
.dock { position: absolute; left: 40px; top: 20px; width: 2800px; height: 110px; }
.shelf { position: absolute; left: 0; top: 42px; }
.icons { position: relative; display: flex; width: 2744px; margin: 0 0 0 38px; padding: 0; list-style: none; }
.icons li { position: relative; flex: none; width: 86.700px; height: 110px; }
.icons svg { width: 86.700px; height: 90px; filter: drop-shadow(0 2px 2px rgba(0, 0, 0, .45)); -webkit-box-reflect: below -2px linear-gradient(transparent 75%, rgba(255, 255, 255, .3)); }
.icons .sep { width: 43px; }
.icons .sep svg { width: 43px; filter: none; -webkit-box-reflect: initial; overflow: visible; }
.icons b {
  position: absolute;
  left: 57px;
  top: 6px;
  width: 24px;
  height: 24px;
  border: 2px solid #f2f2f2;
  border-radius: 50%;
  background: linear-gradient(#f0807c, #e3141c 50%, #c60d14);
  color: #fff;
  font: 400 17px/20px "Open Sans", sans-serif;
  text-align: center;
  box-shadow: 0 1px 3px #000;
}
.on::after {
  content: "";
  position: absolute;
  left: 32px;
  top: 104px;
  width: 23px;
  height: 5px;
  background: #fff;
  box-shadow: 0 0 8px 3px #8fd0ff;
}
.at { font: 38px "Liberation Serif", serif; fill: #f8ecd2; }
.apr { font: 700 13px "Open Sans", sans-serif; fill: #fff; }
.day { font: 700 36px "Liberation Sans", sans-serif; fill: #1c1c1c; }
.route { font: 700 10px "Open Sans", sans-serif; fill: #fff; }
.pages { font: 700 12px "Open Sans", sans-serif; fill: #fff; }
.sub { font: 800 40px "Open Sans", sans-serif; fill: #f9952c; }
.sub-sm { font: 800 17px "Open Sans", sans-serif; fill: #f9952c; }
.prompt { font: 22px "DejaVu Sans Mono", monospace; fill: #1fe23a; }
.prompt-sm { font: 10px "DejaVu Sans Mono", monospace; fill: #1fe23a; }
.gopro { font: 400 17px "Inter", sans-serif; fill: #fff; }
```
FILE: facets.js
```javascript
// Background facets: each token is a column, a diagonal (b = "\", f = "/") and
// the tones of the upper and lower triangle (k darkest, d dark, m base, l light).
const rows = [
  "0bdl 1fml 2bdm 3fml 4bld 7bdd 8bll 9fld 10bll 11fmd 12bdm 17fdm 18blm 19bml",
  "0fdl 1bdd 2fdl 3bdm 4fdl 5blm 6bdd 9bdm 10fld 11bdd 15flm 16fmd 18bmd 19bmd",
  "0bdl 1fml 2bll 3fdl 4blm 5fdl 6bmd 8bld 9fld 10bll 11fmd 12bmd 17blm 19bdm",
  "1bdd 2fdm 3bdl 4fld 5bld 6bdd 7blm 8fdm 9bmm 10bdm 11blm 12bmd 18bld 19fmd",
  "0bld 1flm 2bmd 3fdm 5flm 6bdm 7fld 9fmd 10bmd 17fmd 18flm 19fmd",
  "0fld 1bmd 2fld 3blm 5bdl 6flm 9bmm 10fdl 11bld 12fdm 15blm 17fmd 18bmd",
  "0bdl 1bll 2bmd 3bml 4bdl 6bdm 7fml 8bdl 9fld 10bdl 13flm 16bmd 17flm 19bdd",
  "0fml 1bdd 2bdd 3bld 4fld 5bdl 6fdl 7bmd 8fld 9bdd 10fdl 15bml 16bld 17flm 18bml 19fmd",
  "1fld 2bld 5fdl 6bdd 7fdl 9fml 10bdl 11flm 12bld 13fdd 14bdl 15fdl 16bdm 17flm 18bdm 19bll",
  "2bdd 3bll 4fdm 5bld 6blm 7bdm 8fml 11bdm 12flm 14flm 16fdm 18fdl 19bdl",
  "0blm 1fmd 2bll 3bdd 4bdl 5bdd 6bld 7flk 8bdm 11fmd 12bdd 13fml 14bdl 15fdl 16blm 17bdd 19bdd",
  "0bdd 1bld 2fmd 3bdl 4fld 5bld 6fdm 7bdl 9bml 10fml 11bld 12bdd 13bml 14bdd 15bdd 16flk 17bmk 18flm",
  "1fdm 2blm 3fdl 4bdd 5fml 6blm 7fdm 9fml 10bdl 11fml 12bml 13fmd 16bld 17flm 18bld 19bdd",
  "0fld 1blm 3bdm 8fmd 9bld 10bll 11bml 12bdd 15bdm 16fmd 18fmd 19bmd",
  "0blm 1bdd 2bmd 3fml 5fmd 6bmd 8bdm 9flm 10bdm 11bdm 12bml 14bmd 15fml 18bdl 19flm",
  "0fml 1bld 2fld 3bdm 6fdm 8fml 9bmd 11bdd 12fml 13bdl 14flm 15bdd 18fml 19bdd"
];
const tone = { k: "#303030", d: "#323232", m: "#343434", l: "#363636" };
const shape = {
  b: [[0, 0, 1, 0, 1, 1], [0, 0, 0, 1, 1, 1]],
  f: [[0, 0, 1, 0, 0, 1], [1, 0, 1, 1, 0, 1]]
};
const size = 90;
let out = "";
rows.forEach((row, y) => {
  row.split(" ").forEach(token => {
    const [, col, diagonal, upper, lower] = token.match(/(\d+)(.)(.)(.)/);
    [upper, lower].forEach((name, i) => {
      for (let x = +col; x < 32; x += 20) {
        const points = shape[diagonal][i].map((v, n) => (v + (n % 2 ? y : x)) * size).join(" ");
        out += `<polygon points="${points}" fill="${tone[name]}"/>`;
      }
    });
  });
});
document.querySelector(".facets").innerHTML = out;
```
